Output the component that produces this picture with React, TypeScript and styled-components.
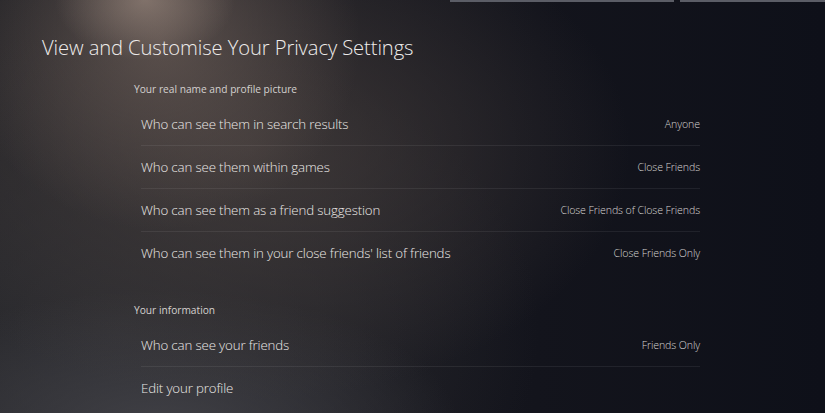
import styled, { createGlobalStyle } from "styled-components";

const GlobalStyle = createGlobalStyle`
  html, body { margin: 0; padding: 0; background: #0f111a; }
  * { box-sizing: border-box; }
`;

interface Setting {
  label: string;
  value?: string;
}

interface SectionData {
  title: string;
  items: Setting[];
}

const sections: SectionData[] = [
  {
    title: "Your real name and profile picture",
    items: [
      { label: "Who can see them in search results", value: "Anyone" },
      { label: "Who can see them within games", value: "Close Friends" },
      { label: "Who can see them as a friend suggestion", value: "Close Friends of Close Friends" },
      { label: "Who can see them in your close friends' list of friends", value: "Close Friends Only" },
    ],
  },
  {
    title: "Your information",
    items: [
      { label: "Who can see your friends", value: "Friends Only" },
      { label: "Edit your profile" },
    ],
  },
];

const Screen = styled.div`
  position: relative;
  width: 825px;
  height: 413px;
  overflow: hidden;
  font-family: "Open Sans", "Noto Sans", sans-serif;
  color: #e8e6e4;
  background:
    radial-gradient(ellipse 90px 60px at 145px 0px, rgba(170, 150, 138, 0.55), rgba(170, 150, 138, 0) 100%),
    radial-gradient(ellipse 200px 190px at 160px 40px, rgba(108, 94, 88, 0.7), rgba(108, 94, 88, 0) 100%),
    radial-gradient(ellipse 380px 250px at 250px 150px, rgba(72, 64, 62, 0.75), rgba(72, 64, 62, 0) 100%),
    radial-gradient(ellipse 300px 140px at 160px 430px, rgba(70, 70, 76, 0.8), rgba(70, 70, 76, 0) 100%),
    radial-gradient(ellipse 420px 300px at 120px 330px, rgba(46, 46, 50, 0.9), rgba(46, 46, 50, 0) 100%),
    linear-gradient(90deg, #222226 0%, #1b1b21 40%, #13141c 65%, #0e1019 100%);
`;

const TopTabs = styled.div`
  display: flex;
  gap: 6px;
  padding-left: 450px;
  height: 2px;
`;

const TabLine = styled.div<{ $w: number }>`
  width: ${(p) => p.$w}px;
  height: 2px;
  background: #5b5d66;
`;

const Body = styled.div`
  padding: 32px 0 0 42px;
`;

const Title = styled.h1`
  margin: 0;
  font-size: 20.2px;
  font-weight: 300;
  line-height: 26px;
  color: #eeeceb;
  letter-spacing: -0.1px;
`;

const Content = styled.div`
  width: 658px;
  margin: 21px 0 0 92px;
`;

const Section = styled.section`
  & + & {
    margin-top: 28px;
  }
`;

const SectionTitle = styled.h2`
  margin: 0;
  height: 16px;
  font-size: 10.2px;
  font-weight: 400;
  line-height: 16px;
  color: #d4d1cf;
`;

const List = styled.div`
  margin-top: 5px;
  padding-left: 7px;
  width: 566px;
`;

const Row = styled.div`
  display: flex;
  align-items: center;
  justify-content: space-between;
  height: 43px;
  & + & {
    border-top: 1px solid rgba(255, 255, 255, 0.07);
  }
`;

const Label = styled.span`
  font-size: 13.3px;
  font-weight: 300;
  letter-spacing: -0.15px;
  color: #ebe8e6;
`;

const Value = styled.span`
  font-size: 10.6px;
  font-weight: 300;
  letter-spacing: -0.1px;
  color: #d6d3d2;
`;

export default function App() {
  return (
    <>
      <GlobalStyle />
      <Screen>
        <TopTabs>
          <TabLine $w={225} />
          <TabLine $w={145} />
        </TopTabs>
        <Body>
          <Title>View and Customise Your Privacy Settings</Title>
          <Content>
            {sections.map((s) => (
              <Section key={s.title}>
                <SectionTitle>{s.title}</SectionTitle>
                <List>
                  {s.items.map((it) => (
                    <Row key={it.label}>
                      <Label>{it.label}</Label>
                      {it.value && <Value>{it.value}</Value>}
                    </Row>
                  ))}
                </List>
              </Section>
            ))}
          </Content>
        </Body>
      </Screen>
    </>
  );
}
